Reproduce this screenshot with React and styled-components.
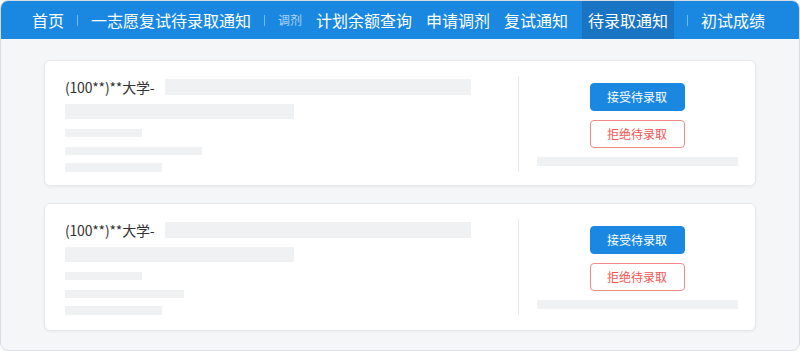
import styled, { createGlobalStyle } from "styled-components";

const GlobalStyle = createGlobalStyle`
  html, body {
    margin: 0;
    padding: 0;
    background: #ffffff;
  }
  * {
    box-sizing: border-box;
  }
`;

const Frame = styled.div`
  width: 800px;
  height: 351px;
  border: 1px solid #d9dce1;
  border-radius: 8px;
  overflow: hidden;
  background: #f5f6f8;
  font-family: "Noto Sans CJK SC", "Noto Sans", sans-serif;
  display: flex;
  flex-direction: column;
`;

const NavBar = styled.nav`
  height: 38px;
  flex-shrink: 0;
  background: #1a88e0;
  display: flex;
  align-items: stretch;
  gap: 2px;
  padding-left: 25px;
`;

const NavItem = styled.div`
  display: flex;
  align-items: center;
  padding: 0 6px;
  margin: ${(p) => (p.$active ? "0 6px" : "0")};
  background: ${(p) => (p.$active ? "#1a74c4" : "transparent")};
  color: ${(p) => (p.$small ? "rgba(255,255,255,0.65)" : "#ffffff")};
  font-size: ${(p) => (p.$small ? "12px" : "16px")};
  white-space: nowrap;
  line-height: 1;
`;

const NavSep = styled.span`
  align-self: center;
  width: 1px;
  height: 11px;
  margin: 0 5px;
  background: rgba(255, 255, 255, 0.4);
`;

const Main = styled.main`
  flex: 1;
  display: flex;
  flex-direction: column;
  gap: 17px;
  padding: 21px 43px 0 43px;
`;

const Card = styled.section`
  height: ${(p) => p.$h}px;
  background: #ffffff;
  border: 1px solid #e5e7eb;
  border-radius: 6px;
  box-shadow: 0 1px 3px rgba(0, 0, 0, 0.05);
  display: grid;
  grid-template-columns: 1fr 237px;
  padding: 15px 0 15px 20px;
`;

const Info = styled.div`
  display: flex;
  flex-direction: column;
  align-items: flex-start;
  padding-top: ${(p) => p.$top}px;
`;

const TitleRow = styled.div`
  display: flex;
  align-items: center;
  gap: 11px;
  height: 16px;
`;

const Title = styled.span`
  font-size: 14px;
  color: #333333;
  line-height: 1;
  white-space: nowrap;
  letter-spacing: -0.2px;
`;

const Bar = styled.div`
  width: ${(p) => p.$w}px;
  height: ${(p) => p.$h}px;
  margin-top: ${(p) => p.$mt || 0}px;
  background: #f0f1f3;
  flex-shrink: 0;
`;

const Actions = styled.div`
  border-left: 1px solid #e8eaed;
  display: flex;
  flex-direction: column;
  align-items: center;
  justify-content: center;
  gap: 9px;
  padding: 0 18px;
`;

const Button = styled.button`
  width: 95px;
  height: 28px;
  border-radius: 4px;
  font-family: inherit;
  font-size: 12px;
  cursor: pointer;
  border: 1px solid ${(p) => (p.$danger ? "#f38a8a" : "#1a88e0")};
  background: ${(p) => (p.$danger ? "#ffffff" : "#1a88e0")};
  color: ${(p) => (p.$danger ? "#f05454" : "#ffffff")};
  padding: 0;
`;

const tabs = [
  { label: "首页" },
  { sep: true },
  { label: "一志愿复试待录取通知" },
  { sep: true },
  { label: "调剂", small: true },
  { label: "计划余额查询" },
  { label: "申请调剂" },
  { label: "复试通知" },
  { label: "待录取通知", active: true },
  { sep: true },
  { label: "初试成绩" },
];

const records = [
  { h: 126, top: 3, lines: [77, 137, 97] },
  { h: 128, top: 3, lines: [77, 119, 97] },
];

function Record({ record }) {
  return (
    <Card $h={record.h}>
      <Info $top={record.top}>
        <TitleRow>
          <Title>(100**)**大学-</Title>
          <Bar $w={306} $h={16} />
        </TitleRow>
        <Bar $w={229} $h={15} $mt={9} />
        <Bar $w={record.lines[0]} $h={8} $mt={10} />
        <Bar $w={record.lines[1]} $h={8} $mt={10} />
        <Bar $w={record.lines[2]} $h={9} $mt={8} />
      </Info>
      <Actions>
        <Button>接受待录取</Button>
        <Button $danger>拒绝待录取</Button>
        <Bar $w={201} $h={9} />
      </Actions>
    </Card>
  );
}

export default function App() {
  return (
    <>
      <GlobalStyle />
      <Frame>
        <NavBar>
          {tabs.map((t, i) =>
            t.sep ? (
              <NavSep key={i} />
            ) : (
              <NavItem key={i} $active={t.active} $small={t.small}>
                {t.label}
              </NavItem>
            )
          )}
        </NavBar>
        <Main>
          {records.map((r, i) => (
            <Record key={i} record={r} />
          ))}
        </Main>
      </Frame>
    </>
  );
}
